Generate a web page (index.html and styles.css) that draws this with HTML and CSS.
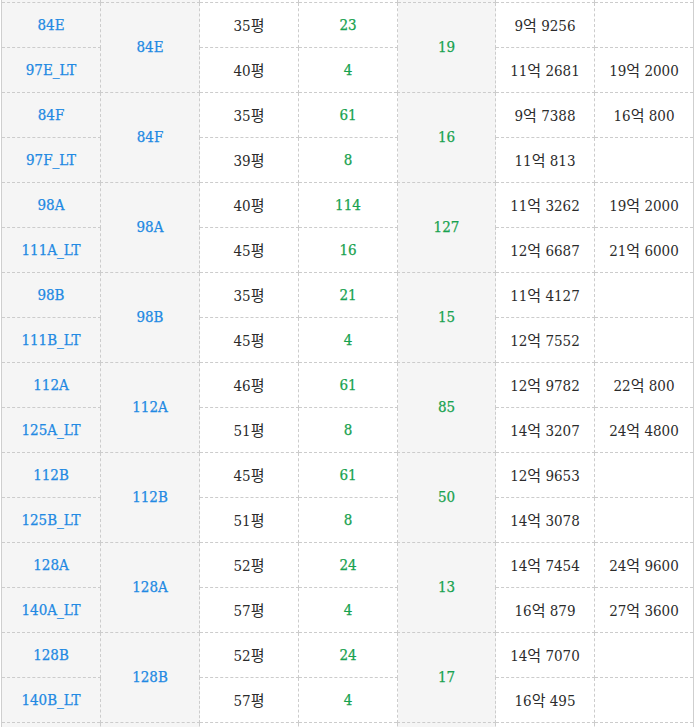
FILE: index.html
```html
<!DOCTYPE html>
<html lang="ko">
<head>
<meta charset="utf-8">
<title>평형별 분양가</title>
<link rel="stylesheet" href="styles.css">
</head>
<body>
<table class="price">
  <colgroup>
    <col class="c1"><col class="c2"><col class="c3"><col class="c4"><col class="c5"><col class="c6"><col class="c7">
  </colgroup>
  <tbody>
    <tr class="cut"><td class="g"></td><td class="g"></td><td></td><td></td><td class="g"></td><td></td><td></td></tr>

    <tr><td class="g b">84E</td><td class="g b" rowspan="2">84E</td><td>35평</td><td class="n">23</td><td class="g n" rowspan="2">19</td><td>9억 9256</td><td></td></tr>
    <tr><td class="g b">97E_LT</td><td>40평</td><td class="n">4</td><td>11억 2681</td><td>19억 2000</td></tr>

    <tr><td class="g b">84F</td><td class="g b" rowspan="2">84F</td><td>35평</td><td class="n">61</td><td class="g n" rowspan="2">16</td><td>9억 7388</td><td>16억 800</td></tr>
    <tr><td class="g b">97F_LT</td><td>39평</td><td class="n">8</td><td>11억 813</td><td></td></tr>

    <tr><td class="g b">98A</td><td class="g b" rowspan="2">98A</td><td>40평</td><td class="n">114</td><td class="g n" rowspan="2">127</td><td>11억 3262</td><td>19억 2000</td></tr>
    <tr><td class="g b">111A_LT</td><td>45평</td><td class="n">16</td><td>12억 6687</td><td>21억 6000</td></tr>

    <tr><td class="g b">98B</td><td class="g b" rowspan="2">98B</td><td>35평</td><td class="n">21</td><td class="g n" rowspan="2">15</td><td>11억 4127</td><td></td></tr>
    <tr><td class="g b">111B_LT</td><td>45평</td><td class="n">4</td><td>12억 7552</td><td></td></tr>

    <tr><td class="g b">112A</td><td class="g b" rowspan="2">112A</td><td>46평</td><td class="n">61</td><td class="g n" rowspan="2">85</td><td>12억 9782</td><td>22억 800</td></tr>
    <tr><td class="g b">125A_LT</td><td>51평</td><td class="n">8</td><td>14억 3207</td><td>24억 4800</td></tr>

    <tr><td class="g b">112B</td><td class="g b" rowspan="2">112B</td><td>45평</td><td class="n">61</td><td class="g n" rowspan="2">50</td><td>12억 9653</td><td></td></tr>
    <tr><td class="g b">125B_LT</td><td>51평</td><td class="n">8</td><td>14억 3078</td><td></td></tr>

    <tr><td class="g b">128A</td><td class="g b" rowspan="2">128A</td><td>52평</td><td class="n">24</td><td class="g n" rowspan="2">13</td><td>14억 7454</td><td>24억 9600</td></tr>
    <tr><td class="g b">140A_LT</td><td>57평</td><td class="n">4</td><td>16억 879</td><td>27억 3600</td></tr>

    <tr><td class="g b">128B</td><td class="g b" rowspan="2">128B</td><td>52평</td><td class="n">24</td><td class="g n" rowspan="2">17</td><td>14억 7070</td><td></td></tr>
    <tr><td class="g b">140B_LT</td><td>57평</td><td class="n">4</td><td>16악 495</td><td></td></tr>

    <tr class="tail"><td class="g"></td><td class="g"></td><td></td><td></td><td class="g"></td><td></td><td></td></tr>
  </tbody>
</table>
</body>
</html>
```

FILE: styles.css
```css
html, body {
  margin: 0;
  padding: 0;
  background: #ffffff;
}

.price {
  margin-left: 1px;
  width: 693px;
  border-collapse: collapse;
  table-layout: fixed;
  border-left: 1px solid #cfcfcf;
  border-right: 1px solid #cfcfcf;
  font-family: "DejaVu Serif Condensed", "DejaVu Serif", "Noto Sans CJK KR", serif;
  font-size: 15px;
  color: #2b2b2b;
}

.c1, .c2, .c3, .c4, .c6, .c7 { width: 99px; }
.c5 { width: 98px; }

.price td {
  border: 1px dashed #cccccc;
  height: 43px;
  padding: 0 0 1px;
  text-align: center;
  vertical-align: middle;
  background: #ffffff;
}

.price tr.cut td {
  height: 2px;
  padding: 0;
  border-top: none;
}

.price tr.tail td {
  height: 10px;
  padding: 0;
  border-bottom: none;
}

.price td.g { background: #f5f5f5; }
.price td.b { color: #2189e3; -webkit-text-stroke: 0.25px currentColor; }
.price td.n { color: #18a24f; -webkit-text-stroke: 0.25px currentColor; }
```
